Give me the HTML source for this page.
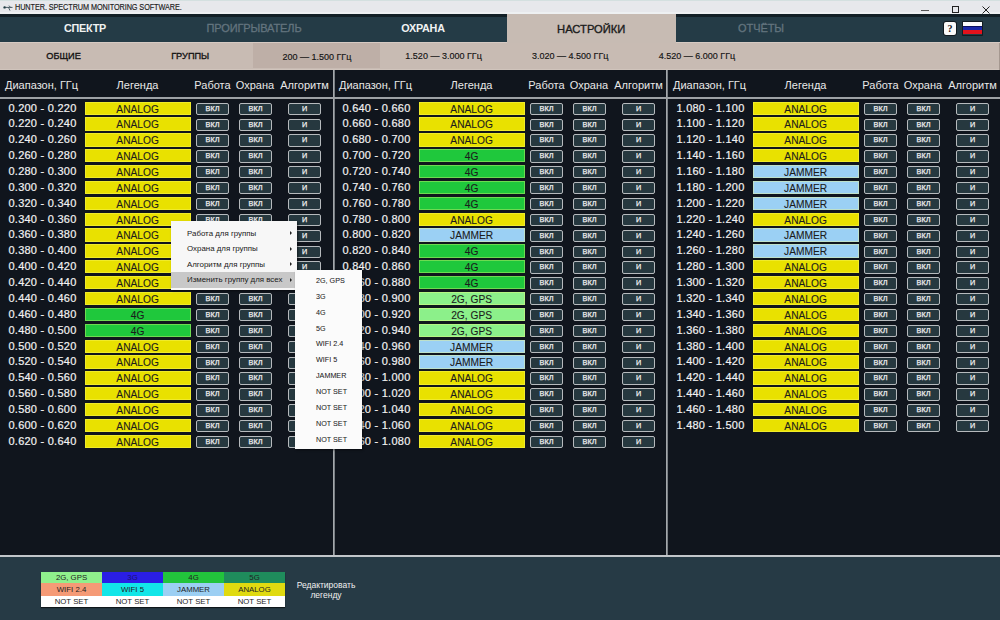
<!DOCTYPE html><html><head><meta charset="utf-8"><style>
*{margin:0;padding:0;box-sizing:border-box}
html,body{width:1000px;height:620px;overflow:hidden;background:#10151d;font-family:"Liberation Sans", sans-serif}
#title{position:absolute;left:0;top:0;width:1000px;height:15px;background:#e7e8ec;border-top:1px solid #d4e0e0;border-bottom:3px solid #eef0f2}
#title .t{position:absolute;left:15px;top:0.5px;font-size:8.3px;color:#1a1a1a;letter-spacing:-0.1px;transform:scaleX(0.88);transform-origin:0 0;-webkit-text-stroke:0.15px #1a1a1a;white-space:nowrap}
#nav{position:absolute;left:0;top:14px;width:1000px;height:28px;background:#243b46;border-top:3px solid #121f26}
.tab{position:absolute;top:0;height:26px;width:170px;text-align:center;font-size:10.8px;letter-spacing:-0.2px;font-weight:bold;line-height:23px;color:#f0f2f2}
.tab.dim{color:#63747e;font-weight:normal;font-size:11px;letter-spacing:-0.1px;-webkit-text-stroke:0.3px #63747e}
.tab.act{background:#c7bbb3;color:#1b1b1b;font-weight:normal;font-size:11.2px;letter-spacing:0;-webkit-text-stroke:0.35px #1b1b1b;top:-3px;height:29px;line-height:30px;width:169.5px;z-index:2}
#sub{position:absolute;left:0;top:42px;width:1000px;height:28px;background:#c8bbb3;border-top:1px solid #d6cac3;border-bottom:1px solid #d0c4bc}
.st{position:absolute;top:-1px;height:28px;width:127px;text-align:center;font-size:9px;line-height:29px;color:#141414;-webkit-text-stroke:0.15px #141414}
.st.b{font-weight:normal;font-size:9.2px;line-height:28.2px;-webkit-text-stroke:0.35px #141414}
.st.act{background:#beafa7;background-clip:content-box;padding:1px 0 2px}
#content{position:absolute;left:0;top:70px;width:1000px;height:486px;background:#10151d}
.col{position:absolute;top:0;height:486px;width:333px}
.vd{position:absolute;top:70px;width:2px;height:485px;background:linear-gradient(90deg,#a4a8ac 50%,#7a7f84 50%)}
.sep{position:absolute;left:0;top:97px;width:1000px;height:2px;background:#9da1a5;z-index:1}
.hd{position:absolute;top:77px;height:16px;line-height:16px;font-size:11px;color:#e8e8e8;text-align:center;white-space:nowrap}
.rg{position:absolute;left:0;width:85px;-webkit-text-stroke:0.2px #f2f2f2;height:13.4px;text-align:center;font-size:11px;letter-spacing:0.25px;line-height:13px;color:#f2f2f2;white-space:nowrap}
.lg{position:absolute;left:84.6px;width:106px;height:13.3px;box-shadow:inset 0 0 0 1px rgba(255,255,120,.35);text-align:center;font-size:10.2px;line-height:15.5px;color:#1c1c1c;-webkit-text-stroke:0.1px #1c1c1c;white-space:nowrap}
.bt{position:absolute;width:33px;height:12.3px;border:1px solid #b6babd;border-radius:2px;background:#26383f;text-align:center;font-size:7.3px;font-weight:normal;-webkit-text-stroke:0.25px #f0f0f0;line-height:10.5px;color:#f0f0f0}
#bottom{position:absolute;left:0;top:555px;width:1000px;height:65px;background:#263a45;border-top:2px solid #c2c6ca}
#leg{position:absolute;left:41px;top:572px;width:244px;height:35px;box-shadow:0 1px 1px rgba(0,0,0,.6)}
#leg div{position:absolute;width:61px;height:12px;text-align:center;font-size:7.8px;line-height:12px;color:#222;white-space:nowrap}
#edit{position:absolute;left:290px;top:580px;width:72px;text-align:center;font-size:8.5px;line-height:10px;color:#f0f0f0}
#menu{position:absolute;left:171px;top:221px;width:126px;height:69px;background:#f7f7f7;box-shadow:1px 1px 2px rgba(0,0,0,.5)}
#menu .mi{position:absolute;left:0;width:124px;height:15.5px;font-size:7.9px;line-height:15.5px;color:#202020;padding-left:16px;white-space:nowrap}
#menu .mi.h{background:#c8c8c8}
#menu .ar{position:absolute;right:3.5px;top:5.5px;width:0;height:0;border-left:2.8px solid #222;border-top:2.3px solid transparent;border-bottom:2.3px solid transparent}
#submenu{position:absolute;left:295px;top:269.5px;width:67px;height:179px;background:#fbfbfb;box-shadow:1px 1px 2px rgba(0,0,0,.5)}
#submenu .si{position:absolute;left:21px;font-size:7.2px;line-height:16px;height:16px;color:#222;-webkit-text-stroke:0.05px #222;white-space:nowrap}
</style></head><body>
<div id="title"><svg style="position:absolute;left:2px;top:2px" width="12" height="10" viewBox="0 0 12 10"><circle cx="2.6" cy="4.4" r="1.2" fill="#1e3a40"/><path d="M3 4.4H10.5M6.5 4.4L8 7.6M8.5 4.4L7 2.6" stroke="#3a4e58" stroke-width="0.9" fill="none"/></svg><div class="t">HUNTER. SPECTRUM MONITORING SOFTWARE.</div><div style="position:absolute;left:921px;top:8.5px;width:8px;height:1px;background:#555"></div><div style="position:absolute;left:952px;top:5px;width:7px;height:7px;border:1px solid #222"></div><svg style="position:absolute;left:982px;top:5px" width="8" height="8" viewBox="0 0 8 8"><path d="M0.5 0.5L7.5 7.5M7.5 0.5L0.5 7.5" stroke="#222" stroke-width="1"/></svg></div>
<div id="nav">
<div class="tab " style="left:0px">СПЕКТР</div>
<div class="tab dim" style="left:169px">ПРОИГРЫВАТЕЛЬ</div>
<div class="tab " style="left:338px">ОХРАНА</div>
<div class="tab act" style="left:506.5px">НАСТРОЙКИ</div>
<div class="tab dim" style="left:676px">ОТЧЁТЫ</div>
<div style="position:absolute;left:944px;top:5px;width:12px;height:12.5px;background:#fafafa;border-radius:2px;box-shadow:0 0 0 0.8px #0c1216;font:bold 10px 'Liberation Serif',serif;color:#111;text-align:center;line-height:13px">?</div>
<div style="position:absolute;left:963px;top:5px;width:19px;height:12.5px;box-shadow:0 0 0 0.8px #10161a"><div style="height:4.3px;background:#fbfbfb"></div><div style="height:4px;background:#1a28a8;border-top:0.8px solid #0a1060"></div><div style="height:4.2px;background:#e3121c"></div></div>
</div>
<div id="sub">
<div class="st b" style="left:0.0px">ОБЩИЕ</div>
<div class="st b" style="left:126.7px">ГРУППЫ</div>
<div class="st act" style="left:253.4px">200 — 1.500 ГГц</div>
<div class="st " style="left:380.1px">1.520 — 3.000 ГГц</div>
<div class="st " style="left:506.8px">3.020 — 4.500 ГГц</div>
<div class="st " style="left:633.5px">4.520 — 6.000 ГГц</div>
<div style="position:absolute;left:999px;top:0;width:1px;height:28px;background:#a59890"></div>
</div>
<div id="content"></div>
<div class="sep"></div>
<div class="vd" style="left:333px"></div>
<div class="vd" style="left:666px"></div>
<div class="col" style="left:0px">
<div class="hd" style="left:5px;width:76px;text-align:left">Диапазон, ГГц</div>
<div class="hd" style="left:84px;width:107px">Легенда</div>
<div class="hd" style="left:192px;width:41px">Работа</div>
<div class="hd" style="left:234px;width:42px">Охрана</div>
<div class="hd" style="left:278px;width:53px">Алгоритм</div>
<div class="rg" style="top:101.50px">0.200 - 0.220</div>
<div class="lg" style="top:101.50px;background:#e9e100">ANALOG</div>
<div class="bt" style="top:102.70px;left:196px">ВКЛ</div>
<div class="bt" style="top:102.70px;left:239px">ВКЛ</div>
<div class="bt" style="top:102.70px;left:288px">И</div>
<div class="rg" style="top:117.37px">0.220 - 0.240</div>
<div class="lg" style="top:117.37px;background:#e9e100">ANALOG</div>
<div class="bt" style="top:118.57px;left:196px">ВКЛ</div>
<div class="bt" style="top:118.57px;left:239px">ВКЛ</div>
<div class="bt" style="top:118.57px;left:288px">И</div>
<div class="rg" style="top:133.24px">0.240 - 0.260</div>
<div class="lg" style="top:133.24px;background:#e9e100">ANALOG</div>
<div class="bt" style="top:134.44px;left:196px">ВКЛ</div>
<div class="bt" style="top:134.44px;left:239px">ВКЛ</div>
<div class="bt" style="top:134.44px;left:288px">И</div>
<div class="rg" style="top:149.11px">0.260 - 0.280</div>
<div class="lg" style="top:149.11px;background:#e9e100">ANALOG</div>
<div class="bt" style="top:150.31px;left:196px">ВКЛ</div>
<div class="bt" style="top:150.31px;left:239px">ВКЛ</div>
<div class="bt" style="top:150.31px;left:288px">И</div>
<div class="rg" style="top:164.98px">0.280 - 0.300</div>
<div class="lg" style="top:164.98px;background:#e9e100">ANALOG</div>
<div class="bt" style="top:166.18px;left:196px">ВКЛ</div>
<div class="bt" style="top:166.18px;left:239px">ВКЛ</div>
<div class="bt" style="top:166.18px;left:288px">И</div>
<div class="rg" style="top:180.85px">0.300 - 0.320</div>
<div class="lg" style="top:180.85px;background:#e9e100">ANALOG</div>
<div class="bt" style="top:182.05px;left:196px">ВКЛ</div>
<div class="bt" style="top:182.05px;left:239px">ВКЛ</div>
<div class="bt" style="top:182.05px;left:288px">И</div>
<div class="rg" style="top:196.72px">0.320 - 0.340</div>
<div class="lg" style="top:196.72px;background:#e9e100">ANALOG</div>
<div class="bt" style="top:197.92px;left:196px">ВКЛ</div>
<div class="bt" style="top:197.92px;left:239px">ВКЛ</div>
<div class="bt" style="top:197.92px;left:288px">И</div>
<div class="rg" style="top:212.59px">0.340 - 0.360</div>
<div class="lg" style="top:212.59px;background:#e9e100">ANALOG</div>
<div class="bt" style="top:213.79px;left:196px">ВКЛ</div>
<div class="bt" style="top:213.79px;left:239px">ВКЛ</div>
<div class="bt" style="top:213.79px;left:288px">И</div>
<div class="rg" style="top:228.46px">0.360 - 0.380</div>
<div class="lg" style="top:228.46px;background:#e9e100">ANALOG</div>
<div class="bt" style="top:229.66px;left:196px">ВКЛ</div>
<div class="bt" style="top:229.66px;left:239px">ВКЛ</div>
<div class="bt" style="top:229.66px;left:288px">И</div>
<div class="rg" style="top:244.33px">0.380 - 0.400</div>
<div class="lg" style="top:244.33px;background:#e9e100">ANALOG</div>
<div class="bt" style="top:245.53px;left:196px">ВКЛ</div>
<div class="bt" style="top:245.53px;left:239px">ВКЛ</div>
<div class="bt" style="top:245.53px;left:288px">И</div>
<div class="rg" style="top:260.20px">0.400 - 0.420</div>
<div class="lg" style="top:260.20px;background:#e9e100">ANALOG</div>
<div class="bt" style="top:261.40px;left:196px">ВКЛ</div>
<div class="bt" style="top:261.40px;left:239px">ВКЛ</div>
<div class="bt" style="top:261.40px;left:288px">И</div>
<div class="rg" style="top:276.07px">0.420 - 0.440</div>
<div class="lg" style="top:276.07px;background:#e9e100">ANALOG</div>
<div class="bt" style="top:277.27px;left:196px">ВКЛ</div>
<div class="bt" style="top:277.27px;left:239px">ВКЛ</div>
<div class="bt" style="top:277.27px;left:288px">И</div>
<div class="rg" style="top:291.94px">0.440 - 0.460</div>
<div class="lg" style="top:291.94px;background:#e9e100">ANALOG</div>
<div class="bt" style="top:293.14px;left:196px">ВКЛ</div>
<div class="bt" style="top:293.14px;left:239px">ВКЛ</div>
<div class="bt" style="top:293.14px;left:288px">И</div>
<div class="rg" style="top:307.81px">0.460 - 0.480</div>
<div class="lg" style="top:307.81px;background:#1fc83c">4G</div>
<div class="bt" style="top:309.01px;left:196px">ВКЛ</div>
<div class="bt" style="top:309.01px;left:239px">ВКЛ</div>
<div class="bt" style="top:309.01px;left:288px">И</div>
<div class="rg" style="top:323.68px">0.480 - 0.500</div>
<div class="lg" style="top:323.68px;background:#1fc83c">4G</div>
<div class="bt" style="top:324.88px;left:196px">ВКЛ</div>
<div class="bt" style="top:324.88px;left:239px">ВКЛ</div>
<div class="bt" style="top:324.88px;left:288px">И</div>
<div class="rg" style="top:339.55px">0.500 - 0.520</div>
<div class="lg" style="top:339.55px;background:#e9e100">ANALOG</div>
<div class="bt" style="top:340.75px;left:196px">ВКЛ</div>
<div class="bt" style="top:340.75px;left:239px">ВКЛ</div>
<div class="bt" style="top:340.75px;left:288px">И</div>
<div class="rg" style="top:355.42px">0.520 - 0.540</div>
<div class="lg" style="top:355.42px;background:#e9e100">ANALOG</div>
<div class="bt" style="top:356.62px;left:196px">ВКЛ</div>
<div class="bt" style="top:356.62px;left:239px">ВКЛ</div>
<div class="bt" style="top:356.62px;left:288px">И</div>
<div class="rg" style="top:371.29px">0.540 - 0.560</div>
<div class="lg" style="top:371.29px;background:#e9e100">ANALOG</div>
<div class="bt" style="top:372.49px;left:196px">ВКЛ</div>
<div class="bt" style="top:372.49px;left:239px">ВКЛ</div>
<div class="bt" style="top:372.49px;left:288px">И</div>
<div class="rg" style="top:387.16px">0.560 - 0.580</div>
<div class="lg" style="top:387.16px;background:#e9e100">ANALOG</div>
<div class="bt" style="top:388.36px;left:196px">ВКЛ</div>
<div class="bt" style="top:388.36px;left:239px">ВКЛ</div>
<div class="bt" style="top:388.36px;left:288px">И</div>
<div class="rg" style="top:403.03px">0.580 - 0.600</div>
<div class="lg" style="top:403.03px;background:#e9e100">ANALOG</div>
<div class="bt" style="top:404.23px;left:196px">ВКЛ</div>
<div class="bt" style="top:404.23px;left:239px">ВКЛ</div>
<div class="bt" style="top:404.23px;left:288px">И</div>
<div class="rg" style="top:418.90px">0.600 - 0.620</div>
<div class="lg" style="top:418.90px;background:#e9e100">ANALOG</div>
<div class="bt" style="top:420.10px;left:196px">ВКЛ</div>
<div class="bt" style="top:420.10px;left:239px">ВКЛ</div>
<div class="bt" style="top:420.10px;left:288px">И</div>
<div class="rg" style="top:434.77px">0.620 - 0.640</div>
<div class="lg" style="top:434.77px;background:#e9e100">ANALOG</div>
<div class="bt" style="top:435.97px;left:196px">ВКЛ</div>
<div class="bt" style="top:435.97px;left:239px">ВКЛ</div>
<div class="bt" style="top:435.97px;left:288px">И</div>
</div>
<div class="col" style="left:334px">
<div class="hd" style="left:5px;width:76px;text-align:left">Диапазон, ГГц</div>
<div class="hd" style="left:84px;width:107px">Легенда</div>
<div class="hd" style="left:192px;width:41px">Работа</div>
<div class="hd" style="left:234px;width:42px">Охрана</div>
<div class="hd" style="left:278px;width:53px">Алгоритм</div>
<div class="rg" style="top:101.50px">0.640 - 0.660</div>
<div class="lg" style="top:101.50px;background:#e9e100">ANALOG</div>
<div class="bt" style="top:102.70px;left:196px">ВКЛ</div>
<div class="bt" style="top:102.70px;left:239px">ВКЛ</div>
<div class="bt" style="top:102.70px;left:288px">И</div>
<div class="rg" style="top:117.37px">0.660 - 0.680</div>
<div class="lg" style="top:117.37px;background:#e9e100">ANALOG</div>
<div class="bt" style="top:118.57px;left:196px">ВКЛ</div>
<div class="bt" style="top:118.57px;left:239px">ВКЛ</div>
<div class="bt" style="top:118.57px;left:288px">И</div>
<div class="rg" style="top:133.24px">0.680 - 0.700</div>
<div class="lg" style="top:133.24px;background:#e9e100">ANALOG</div>
<div class="bt" style="top:134.44px;left:196px">ВКЛ</div>
<div class="bt" style="top:134.44px;left:239px">ВКЛ</div>
<div class="bt" style="top:134.44px;left:288px">И</div>
<div class="rg" style="top:149.11px">0.700 - 0.720</div>
<div class="lg" style="top:149.11px;background:#1fc83c">4G</div>
<div class="bt" style="top:150.31px;left:196px">ВКЛ</div>
<div class="bt" style="top:150.31px;left:239px">ВКЛ</div>
<div class="bt" style="top:150.31px;left:288px">И</div>
<div class="rg" style="top:164.98px">0.720 - 0.740</div>
<div class="lg" style="top:164.98px;background:#1fc83c">4G</div>
<div class="bt" style="top:166.18px;left:196px">ВКЛ</div>
<div class="bt" style="top:166.18px;left:239px">ВКЛ</div>
<div class="bt" style="top:166.18px;left:288px">И</div>
<div class="rg" style="top:180.85px">0.740 - 0.760</div>
<div class="lg" style="top:180.85px;background:#1fc83c">4G</div>
<div class="bt" style="top:182.05px;left:196px">ВКЛ</div>
<div class="bt" style="top:182.05px;left:239px">ВКЛ</div>
<div class="bt" style="top:182.05px;left:288px">И</div>
<div class="rg" style="top:196.72px">0.760 - 0.780</div>
<div class="lg" style="top:196.72px;background:#1fc83c">4G</div>
<div class="bt" style="top:197.92px;left:196px">ВКЛ</div>
<div class="bt" style="top:197.92px;left:239px">ВКЛ</div>
<div class="bt" style="top:197.92px;left:288px">И</div>
<div class="rg" style="top:212.59px">0.780 - 0.800</div>
<div class="lg" style="top:212.59px;background:#e9e100">ANALOG</div>
<div class="bt" style="top:213.79px;left:196px">ВКЛ</div>
<div class="bt" style="top:213.79px;left:239px">ВКЛ</div>
<div class="bt" style="top:213.79px;left:288px">И</div>
<div class="rg" style="top:228.46px">0.800 - 0.820</div>
<div class="lg" style="top:228.46px;background:#9bd0f4">JAMMER</div>
<div class="bt" style="top:229.66px;left:196px">ВКЛ</div>
<div class="bt" style="top:229.66px;left:239px">ВКЛ</div>
<div class="bt" style="top:229.66px;left:288px">И</div>
<div class="rg" style="top:244.33px">0.820 - 0.840</div>
<div class="lg" style="top:244.33px;background:#1fc83c">4G</div>
<div class="bt" style="top:245.53px;left:196px">ВКЛ</div>
<div class="bt" style="top:245.53px;left:239px">ВКЛ</div>
<div class="bt" style="top:245.53px;left:288px">И</div>
<div class="rg" style="top:260.20px">0.840 - 0.860</div>
<div class="lg" style="top:260.20px;background:#1fc83c">4G</div>
<div class="bt" style="top:261.40px;left:196px">ВКЛ</div>
<div class="bt" style="top:261.40px;left:239px">ВКЛ</div>
<div class="bt" style="top:261.40px;left:288px">И</div>
<div class="rg" style="top:276.07px">0.860 - 0.880</div>
<div class="lg" style="top:276.07px;background:#1fc83c">4G</div>
<div class="bt" style="top:277.27px;left:196px">ВКЛ</div>
<div class="bt" style="top:277.27px;left:239px">ВКЛ</div>
<div class="bt" style="top:277.27px;left:288px">И</div>
<div class="rg" style="top:291.94px">0.880 - 0.900</div>
<div class="lg" style="top:291.94px;background:#8cf08a">2G, GPS</div>
<div class="bt" style="top:293.14px;left:196px">ВКЛ</div>
<div class="bt" style="top:293.14px;left:239px">ВКЛ</div>
<div class="bt" style="top:293.14px;left:288px">И</div>
<div class="rg" style="top:307.81px">0.900 - 0.920</div>
<div class="lg" style="top:307.81px;background:#8cf08a">2G, GPS</div>
<div class="bt" style="top:309.01px;left:196px">ВКЛ</div>
<div class="bt" style="top:309.01px;left:239px">ВКЛ</div>
<div class="bt" style="top:309.01px;left:288px">И</div>
<div class="rg" style="top:323.68px">0.920 - 0.940</div>
<div class="lg" style="top:323.68px;background:#8cf08a">2G, GPS</div>
<div class="bt" style="top:324.88px;left:196px">ВКЛ</div>
<div class="bt" style="top:324.88px;left:239px">ВКЛ</div>
<div class="bt" style="top:324.88px;left:288px">И</div>
<div class="rg" style="top:339.55px">0.940 - 0.960</div>
<div class="lg" style="top:339.55px;background:#9bd0f4">JAMMER</div>
<div class="bt" style="top:340.75px;left:196px">ВКЛ</div>
<div class="bt" style="top:340.75px;left:239px">ВКЛ</div>
<div class="bt" style="top:340.75px;left:288px">И</div>
<div class="rg" style="top:355.42px">0.960 - 0.980</div>
<div class="lg" style="top:355.42px;background:#9bd0f4">JAMMER</div>
<div class="bt" style="top:356.62px;left:196px">ВКЛ</div>
<div class="bt" style="top:356.62px;left:239px">ВКЛ</div>
<div class="bt" style="top:356.62px;left:288px">И</div>
<div class="rg" style="top:371.29px">0.980 - 1.000</div>
<div class="lg" style="top:371.29px;background:#e9e100">ANALOG</div>
<div class="bt" style="top:372.49px;left:196px">ВКЛ</div>
<div class="bt" style="top:372.49px;left:239px">ВКЛ</div>
<div class="bt" style="top:372.49px;left:288px">И</div>
<div class="rg" style="top:387.16px">1.000 - 1.020</div>
<div class="lg" style="top:387.16px;background:#e9e100">ANALOG</div>
<div class="bt" style="top:388.36px;left:196px">ВКЛ</div>
<div class="bt" style="top:388.36px;left:239px">ВКЛ</div>
<div class="bt" style="top:388.36px;left:288px">И</div>
<div class="rg" style="top:403.03px">1.020 - 1.040</div>
<div class="lg" style="top:403.03px;background:#e9e100">ANALOG</div>
<div class="bt" style="top:404.23px;left:196px">ВКЛ</div>
<div class="bt" style="top:404.23px;left:239px">ВКЛ</div>
<div class="bt" style="top:404.23px;left:288px">И</div>
<div class="rg" style="top:418.90px">1.040 - 1.060</div>
<div class="lg" style="top:418.90px;background:#e9e100">ANALOG</div>
<div class="bt" style="top:420.10px;left:196px">ВКЛ</div>
<div class="bt" style="top:420.10px;left:239px">ВКЛ</div>
<div class="bt" style="top:420.10px;left:288px">И</div>
<div class="rg" style="top:434.77px">1.060 - 1.080</div>
<div class="lg" style="top:434.77px;background:#e9e100">ANALOG</div>
<div class="bt" style="top:435.97px;left:196px">ВКЛ</div>
<div class="bt" style="top:435.97px;left:239px">ВКЛ</div>
<div class="bt" style="top:435.97px;left:288px">И</div>
</div>
<div class="col" style="left:668px">
<div class="hd" style="left:5px;width:76px;text-align:left">Диапазон, ГГц</div>
<div class="hd" style="left:84px;width:107px">Легенда</div>
<div class="hd" style="left:192px;width:41px">Работа</div>
<div class="hd" style="left:234px;width:42px">Охрана</div>
<div class="hd" style="left:278px;width:53px">Алгоритм</div>
<div class="rg" style="top:101.50px">1.080 - 1.100</div>
<div class="lg" style="top:101.50px;background:#e9e100">ANALOG</div>
<div class="bt" style="top:102.70px;left:196px">ВКЛ</div>
<div class="bt" style="top:102.70px;left:239px">ВКЛ</div>
<div class="bt" style="top:102.70px;left:288px">И</div>
<div class="rg" style="top:117.37px">1.100 - 1.120</div>
<div class="lg" style="top:117.37px;background:#e9e100">ANALOG</div>
<div class="bt" style="top:118.57px;left:196px">ВКЛ</div>
<div class="bt" style="top:118.57px;left:239px">ВКЛ</div>
<div class="bt" style="top:118.57px;left:288px">И</div>
<div class="rg" style="top:133.24px">1.120 - 1.140</div>
<div class="lg" style="top:133.24px;background:#e9e100">ANALOG</div>
<div class="bt" style="top:134.44px;left:196px">ВКЛ</div>
<div class="bt" style="top:134.44px;left:239px">ВКЛ</div>
<div class="bt" style="top:134.44px;left:288px">И</div>
<div class="rg" style="top:149.11px">1.140 - 1.160</div>
<div class="lg" style="top:149.11px;background:#e9e100">ANALOG</div>
<div class="bt" style="top:150.31px;left:196px">ВКЛ</div>
<div class="bt" style="top:150.31px;left:239px">ВКЛ</div>
<div class="bt" style="top:150.31px;left:288px">И</div>
<div class="rg" style="top:164.98px">1.160 - 1.180</div>
<div class="lg" style="top:164.98px;background:#9bd0f4">JAMMER</div>
<div class="bt" style="top:166.18px;left:196px">ВКЛ</div>
<div class="bt" style="top:166.18px;left:239px">ВКЛ</div>
<div class="bt" style="top:166.18px;left:288px">И</div>
<div class="rg" style="top:180.85px">1.180 - 1.200</div>
<div class="lg" style="top:180.85px;background:#9bd0f4">JAMMER</div>
<div class="bt" style="top:182.05px;left:196px">ВКЛ</div>
<div class="bt" style="top:182.05px;left:239px">ВКЛ</div>
<div class="bt" style="top:182.05px;left:288px">И</div>
<div class="rg" style="top:196.72px">1.200 - 1.220</div>
<div class="lg" style="top:196.72px;background:#9bd0f4">JAMMER</div>
<div class="bt" style="top:197.92px;left:196px">ВКЛ</div>
<div class="bt" style="top:197.92px;left:239px">ВКЛ</div>
<div class="bt" style="top:197.92px;left:288px">И</div>
<div class="rg" style="top:212.59px">1.220 - 1.240</div>
<div class="lg" style="top:212.59px;background:#e9e100">ANALOG</div>
<div class="bt" style="top:213.79px;left:196px">ВКЛ</div>
<div class="bt" style="top:213.79px;left:239px">ВКЛ</div>
<div class="bt" style="top:213.79px;left:288px">И</div>
<div class="rg" style="top:228.46px">1.240 - 1.260</div>
<div class="lg" style="top:228.46px;background:#9bd0f4">JAMMER</div>
<div class="bt" style="top:229.66px;left:196px">ВКЛ</div>
<div class="bt" style="top:229.66px;left:239px">ВКЛ</div>
<div class="bt" style="top:229.66px;left:288px">И</div>
<div class="rg" style="top:244.33px">1.260 - 1.280</div>
<div class="lg" style="top:244.33px;background:#9bd0f4">JAMMER</div>
<div class="bt" style="top:245.53px;left:196px">ВКЛ</div>
<div class="bt" style="top:245.53px;left:239px">ВКЛ</div>
<div class="bt" style="top:245.53px;left:288px">И</div>
<div class="rg" style="top:260.20px">1.280 - 1.300</div>
<div class="lg" style="top:260.20px;background:#e9e100">ANALOG</div>
<div class="bt" style="top:261.40px;left:196px">ВКЛ</div>
<div class="bt" style="top:261.40px;left:239px">ВКЛ</div>
<div class="bt" style="top:261.40px;left:288px">И</div>
<div class="rg" style="top:276.07px">1.300 - 1.320</div>
<div class="lg" style="top:276.07px;background:#e9e100">ANALOG</div>
<div class="bt" style="top:277.27px;left:196px">ВКЛ</div>
<div class="bt" style="top:277.27px;left:239px">ВКЛ</div>
<div class="bt" style="top:277.27px;left:288px">И</div>
<div class="rg" style="top:291.94px">1.320 - 1.340</div>
<div class="lg" style="top:291.94px;background:#e9e100">ANALOG</div>
<div class="bt" style="top:293.14px;left:196px">ВКЛ</div>
<div class="bt" style="top:293.14px;left:239px">ВКЛ</div>
<div class="bt" style="top:293.14px;left:288px">И</div>
<div class="rg" style="top:307.81px">1.340 - 1.360</div>
<div class="lg" style="top:307.81px;background:#e9e100">ANALOG</div>
<div class="bt" style="top:309.01px;left:196px">ВКЛ</div>
<div class="bt" style="top:309.01px;left:239px">ВКЛ</div>
<div class="bt" style="top:309.01px;left:288px">И</div>
<div class="rg" style="top:323.68px">1.360 - 1.380</div>
<div class="lg" style="top:323.68px;background:#e9e100">ANALOG</div>
<div class="bt" style="top:324.88px;left:196px">ВКЛ</div>
<div class="bt" style="top:324.88px;left:239px">ВКЛ</div>
<div class="bt" style="top:324.88px;left:288px">И</div>
<div class="rg" style="top:339.55px">1.380 - 1.400</div>
<div class="lg" style="top:339.55px;background:#e9e100">ANALOG</div>
<div class="bt" style="top:340.75px;left:196px">ВКЛ</div>
<div class="bt" style="top:340.75px;left:239px">ВКЛ</div>
<div class="bt" style="top:340.75px;left:288px">И</div>
<div class="rg" style="top:355.42px">1.400 - 1.420</div>
<div class="lg" style="top:355.42px;background:#e9e100">ANALOG</div>
<div class="bt" style="top:356.62px;left:196px">ВКЛ</div>
<div class="bt" style="top:356.62px;left:239px">ВКЛ</div>
<div class="bt" style="top:356.62px;left:288px">И</div>
<div class="rg" style="top:371.29px">1.420 - 1.440</div>
<div class="lg" style="top:371.29px;background:#e9e100">ANALOG</div>
<div class="bt" style="top:372.49px;left:196px">ВКЛ</div>
<div class="bt" style="top:372.49px;left:239px">ВКЛ</div>
<div class="bt" style="top:372.49px;left:288px">И</div>
<div class="rg" style="top:387.16px">1.440 - 1.460</div>
<div class="lg" style="top:387.16px;background:#e9e100">ANALOG</div>
<div class="bt" style="top:388.36px;left:196px">ВКЛ</div>
<div class="bt" style="top:388.36px;left:239px">ВКЛ</div>
<div class="bt" style="top:388.36px;left:288px">И</div>
<div class="rg" style="top:403.03px">1.460 - 1.480</div>
<div class="lg" style="top:403.03px;background:#e9e100">ANALOG</div>
<div class="bt" style="top:404.23px;left:196px">ВКЛ</div>
<div class="bt" style="top:404.23px;left:239px">ВКЛ</div>
<div class="bt" style="top:404.23px;left:288px">И</div>
<div class="rg" style="top:418.90px">1.480 - 1.500</div>
<div class="lg" style="top:418.90px;background:#e9e100">ANALOG</div>
<div class="bt" style="top:420.10px;left:196px">ВКЛ</div>
<div class="bt" style="top:420.10px;left:239px">ВКЛ</div>
<div class="bt" style="top:420.10px;left:288px">И</div>
</div>
<div id="bottom"></div>
<div id="leg">
<div style="left:0.00px;top:0px;height:11px;line-height:11px;background:#8ff08c;color:#222">2G, GPS</div>
<div style="left:61.00px;top:0px;height:11px;line-height:11px;background:#2a1ee6;color:#1a1470">3G</div>
<div style="left:122.00px;top:0px;height:11px;line-height:11px;background:#22c43c;color:#222">4G</div>
<div style="left:183.00px;top:0px;height:11px;line-height:11px;background:#1f8c5c;color:#222">5G</div>
<div style="left:0.00px;top:11px;height:12.5px;line-height:14px;background:#f59a76;color:#222">WIFI 2.4</div>
<div style="left:61.00px;top:11px;height:12.5px;line-height:14px;background:#12e6e8;color:#222">WIFI 5</div>
<div style="left:122.00px;top:11px;height:12.5px;line-height:14px;background:#9ccff3;color:#222">JAMMER</div>
<div style="left:183.00px;top:11px;height:12.5px;line-height:14px;background:#e0da10;color:#222">ANALOG</div>
<div style="left:0.00px;top:23.5px;height:11.5px;line-height:11.5px;background:#ffffff;color:#222">NOT SET</div>
<div style="left:61.00px;top:23.5px;height:11.5px;line-height:11.5px;background:#ffffff;color:#222">NOT SET</div>
<div style="left:122.00px;top:23.5px;height:11.5px;line-height:11.5px;background:#ffffff;color:#222">NOT SET</div>
<div style="left:183.00px;top:23.5px;height:11.5px;line-height:11.5px;background:#ffffff;color:#222">NOT SET</div>
</div>
<div id="edit">Редактировать<br>легенду</div>
<div id="menu">
<div class="mi" style="top:4.5px">Работа для группы<span class="ar"></span></div>
<div class="mi" style="top:20.0px">Охрана для группы<span class="ar"></span></div>
<div class="mi" style="top:35.5px">Алгоритм для группы<span class="ar"></span></div>
<div class="mi h" style="top:51.0px">Изменить группу для всех<span class="ar"></span></div>
</div>
<div id="submenu">
<div class="si" style="top:3.3px">2G, GPS</div>
<div class="si" style="top:19.2px">3G</div>
<div class="si" style="top:35.1px">4G</div>
<div class="si" style="top:51.0px">5G</div>
<div class="si" style="top:66.9px">WIFI 2.4</div>
<div class="si" style="top:82.8px">WIFI 5</div>
<div class="si" style="top:98.7px">JAMMER</div>
<div class="si" style="top:114.6px">NOT SET</div>
<div class="si" style="top:130.5px">NOT SET</div>
<div class="si" style="top:146.4px">NOT SET</div>
<div class="si" style="top:162.3px">NOT SET</div>
</div>
</body></html>
